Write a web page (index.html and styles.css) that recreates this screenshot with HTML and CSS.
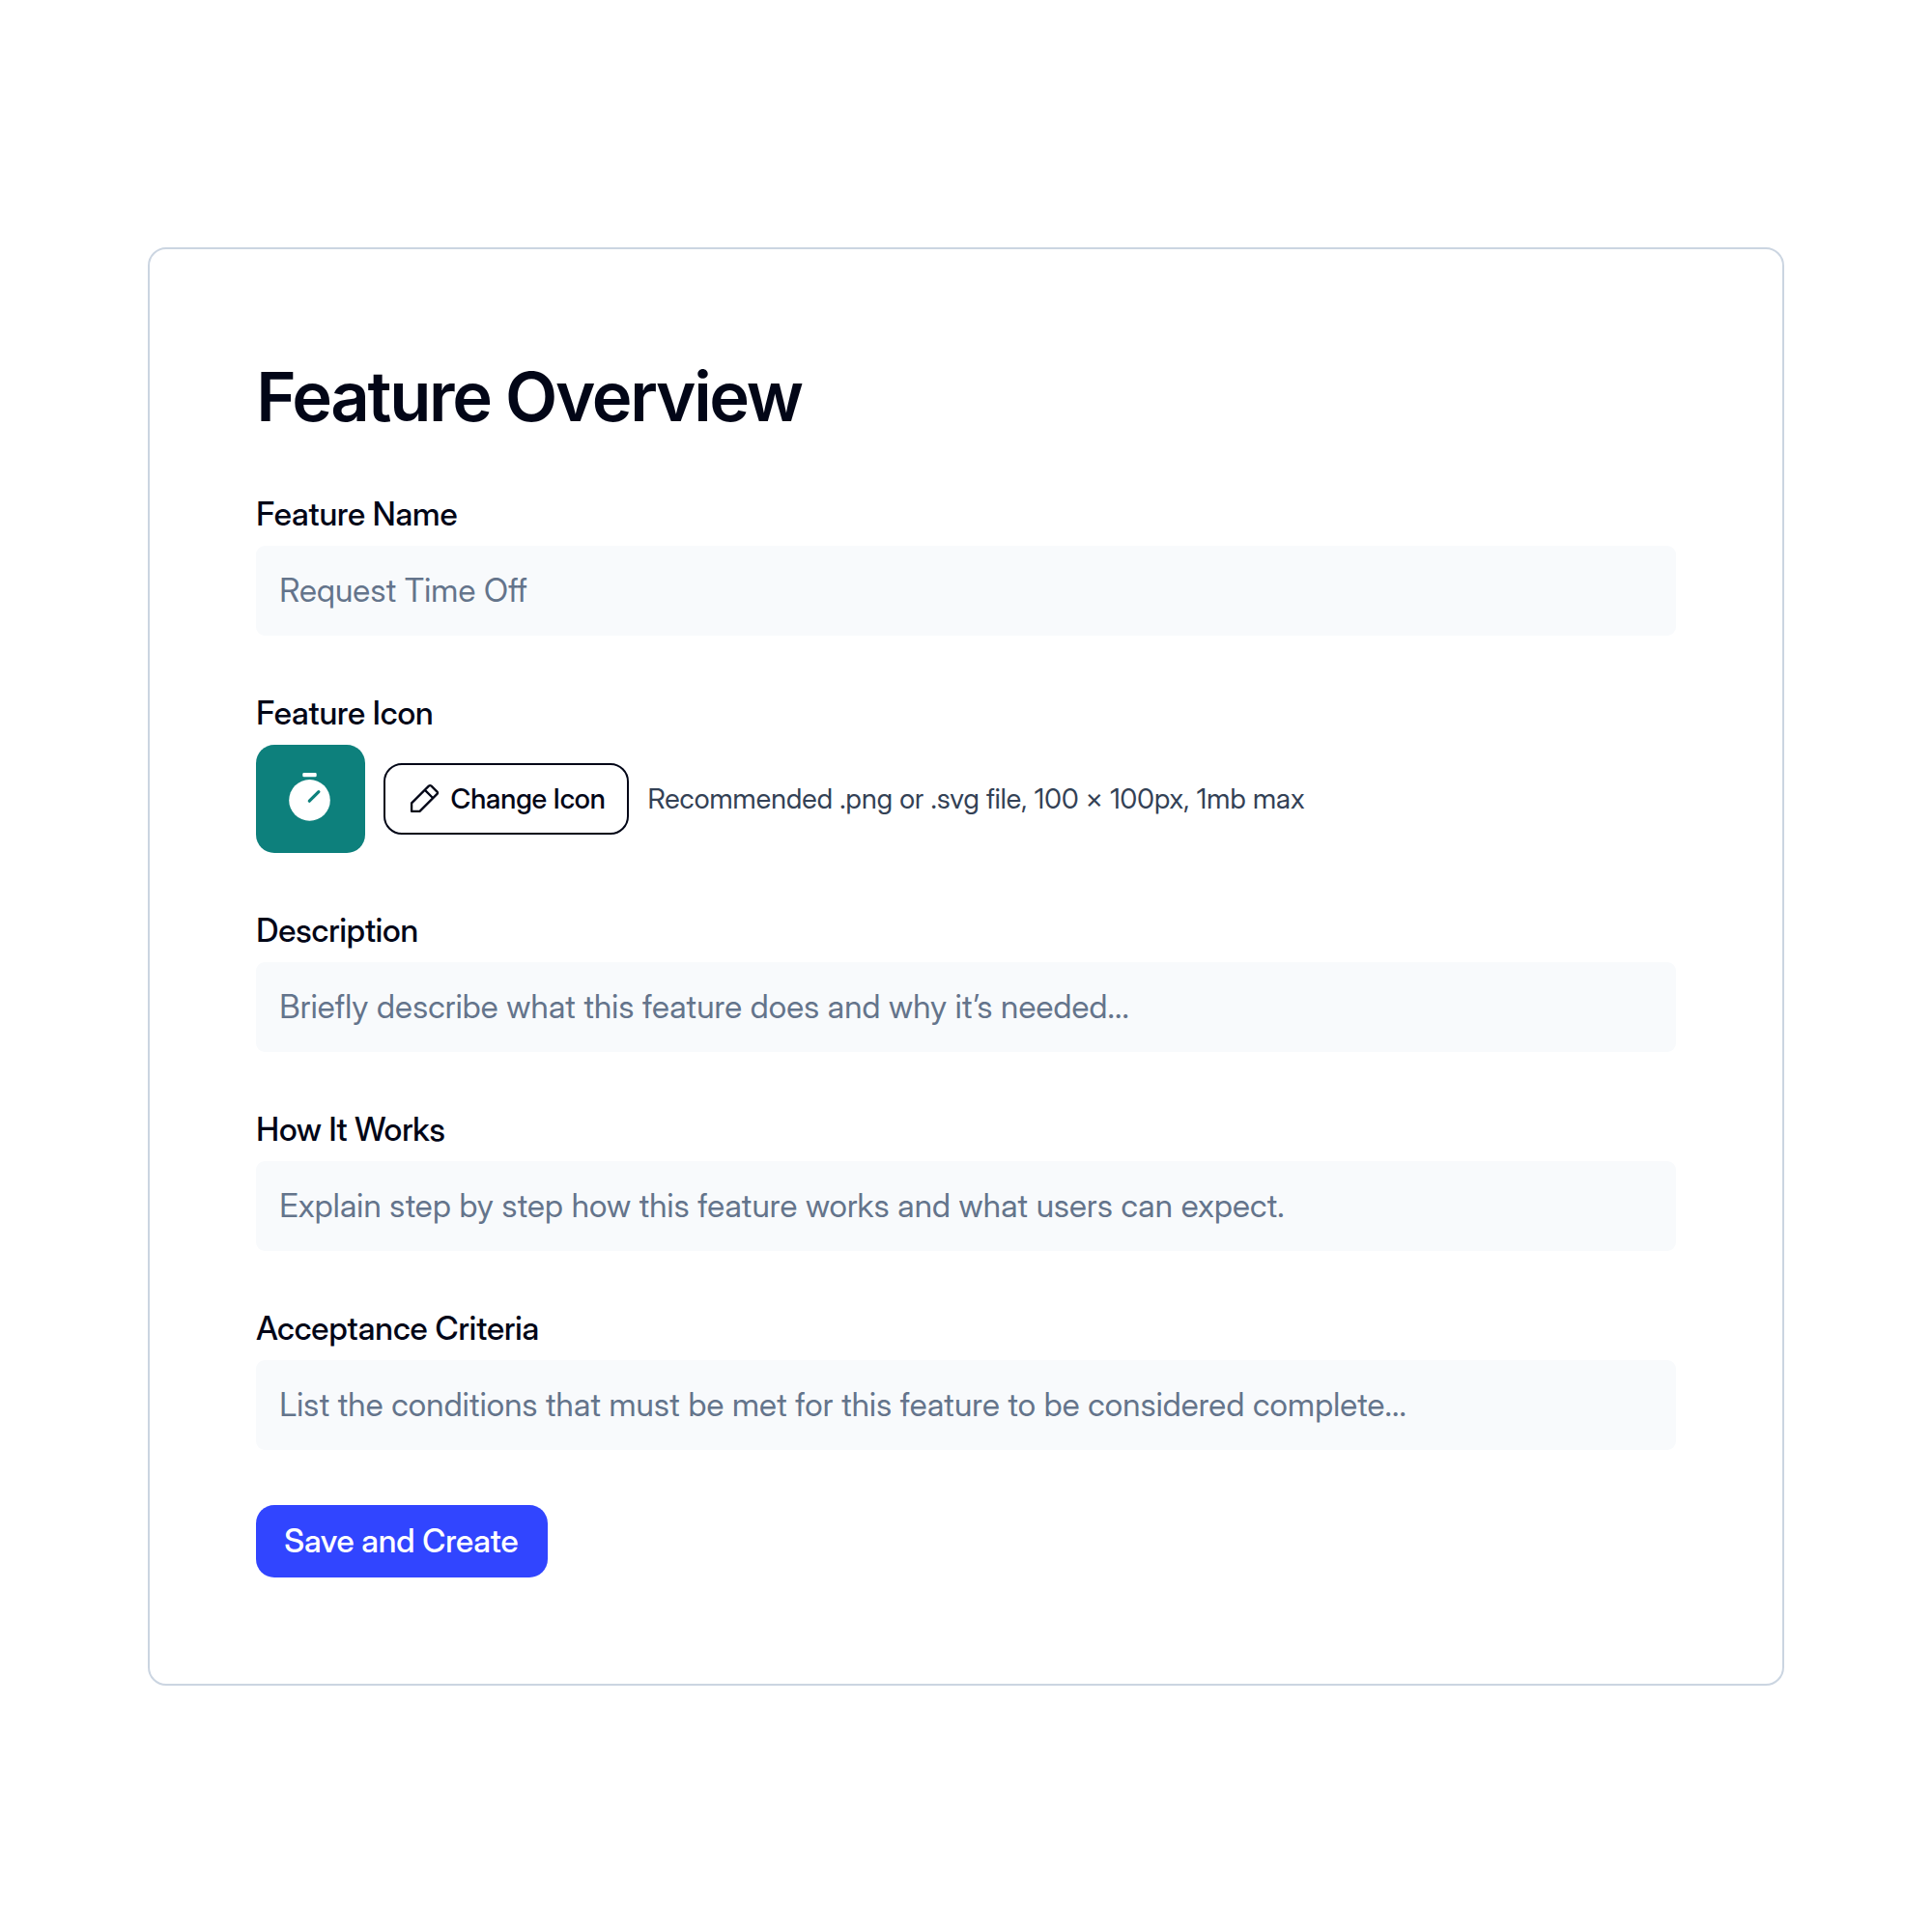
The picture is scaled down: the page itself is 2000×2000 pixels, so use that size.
FILE: index.html
```html
<!DOCTYPE html>
<html lang="en">
<head>
<meta charset="utf-8">
<title>Feature Overview</title>
<link rel="stylesheet" href="styles.css">
</head>
<body>
<main class="card">
  <h1 class="title">Feature Overview</h1>
  <form class="form">
    <div class="field">
      <div class="label">Feature Name</div>
      <div class="input">Request Time Off</div>
    </div>
    <div class="field">
      <div class="label">Feature Icon</div>
      <div class="icon-row">
        <div class="tile">
          <svg class="timer" viewBox="0 0 48 56" fill="none">
            <rect x="16.3" y="1.1" width="14.4" height="4.2" rx="1.4" fill="#fff"/>
            <circle cx="23.5" cy="29.4" r="21.3" fill="#fff"/>
            <path d="M23.300 30.200l9.600-9.600" stroke="#0d807c" stroke-width="3.2" stroke-linecap="round"/>
          </svg>
        </div>
        <button class="change" type="button">
          <svg class="pencil" viewBox="0 0 32 32" fill="none" stroke="currentColor" stroke-width="2.3" stroke-linejoin="round" stroke-linecap="round">
            <path d="M3.100 28.900V20.400L20.900 2.600Q22.200 1.600 23.500 2.600L29.500 8.600Q30.500 9.700 29.500 10.900L11.500 28.900ZM16.900 6.900L25 15"/>
          </svg>
          <span>Change Icon</span>
        </button>
        <div class="hint">Recommended .png or .svg file, 100 × 100px, 1mb max</div>
      </div>
    </div>
    <div class="field">
      <div class="label">Description</div>
      <div class="input">Briefly describe what this feature does and why it’s needed...</div>
    </div>
    <div class="field">
      <div class="label">How It Works</div>
      <div class="input">Explain step by step how this feature works and what users can expect.</div>
    </div>
    <div class="field">
      <div class="label">Acceptance Criteria</div>
      <div class="input">List the conditions that must be met for this feature to be considered complete...</div>
    </div>
    <button class="save" type="button">Save and Create</button>
  </form>
</main>
</body>
</html>
```
FILE: styles.css
```css
* { box-sizing: border-box; }
body {
  margin: 0;
  padding: 256px 153px 0;
  background: #fff;
  color: #020617;
  font-family: "Inter Display", Inter, "Liberation Sans", sans-serif;
}
.card {
  height: 1489px;
  padding: 110px 110.3px;
  border: 2px solid #cbd5e1;
  border-radius: 19px;
}
.title {
  margin: 0 0 58.7px;
  height: 85px;
  line-height: 85px;
  font-family: Inter, "Liberation Sans", sans-serif;
  font-size: 70.6px;
  font-weight: 600;
  letter-spacing: -2.32px;
}
.form { display: flex; flex-direction: column; align-items: flex-start; gap: 59.7px; }
.field { width: 100%; }
.label {
  height: 40px;
  margin-bottom: 13px;
  line-height: 40px;
  font-size: 33.3px;
  font-weight: 500;
  letter-spacing: -0.08px;
}
.input {
  height: 93.3px;
  padding: 0 24px;
  line-height: 93.3px;
  border-radius: 9px;
  background: #f8fafc;
  color: #64748b;
  font-size: 33.3px;
  font-variant-ligatures: no-contextual;
  letter-spacing: 0.19px;
}
.icon-row { display: flex; align-items: center; gap: 19px; }
.tile {
  display: flex;
  align-items: center;
  justify-content: center;
  width: 112.4px;
  height: 112.5px;
  border-radius: 19px;
  background: #0d807c;
}
.timer { width: 48px; height: 56px; }
.change {
  display: flex;
  align-items: center;
  gap: 11.8px;
  width: 254.8px;
  height: 74.7px;
  padding: 0 24px;
  border: 2px solid #020617;
  border-radius: 19px;
  background: #fff;
  color: #020617;
  font: 500 28.7px "Inter Display", Inter, sans-serif;
  letter-spacing: -0.1px;
  white-space: nowrap;
}
.pencil { flex: none; width: 32px; height: 32px; }
.hint {
  color: #334155;
  font-size: 28.7px;
  letter-spacing: 0.07px;
}
.save {
  width: 302px;
  height: 75px;
  margin-top: -3.3px;
  padding: 0 2px 0 0;
  border: 0;
  border-radius: 19px;
  background: #3145ff;
  color: #fff;
  font: 500 33.3px "Inter Display", Inter, sans-serif;
  letter-spacing: -0.11px;
}
```
